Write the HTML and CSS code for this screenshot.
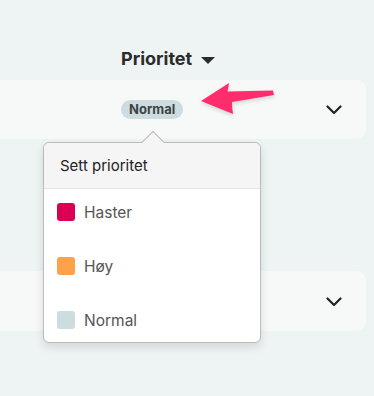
FILE: index.html
```html
<!DOCTYPE html>
<html lang="en">
<head>
    <meta charset="UTF-8">
    <title>Prioritet</title>
    <link rel="stylesheet" href="styles.css">
</head>
<body>

<div class="table">
    <div class="col-header">
        <span>Prioritet</span>
        <span class="caret"></span>
    </div>

    <div class="row">
        <span class="badge">Normal</span>
        <svg class="chevron" width="16" height="10" viewBox="0 0 16 10">
            <path d="M1.5 1.5 L8 8 L14.5 1.5" fill="none" stroke="#222" stroke-width="2.2" stroke-linecap="round" stroke-linejoin="round"/>
        </svg>
    </div>

    <div class="row row-second">
        <svg class="chevron" width="16" height="10" viewBox="0 0 16 10">
            <path d="M1.5 1.5 L8 8 L14.5 1.5" fill="none" stroke="#222" stroke-width="2.2" stroke-linecap="round" stroke-linejoin="round"/>
        </svg>
    </div>
</div>

<svg class="pointer-arrow" width="80" height="40" viewBox="196 80 80 40">
    <path d="M201 101 L229 83 Q228.5 87.5 227.5 91.5 Q250 91 273 90.5 L274 95 Q253 98.5 232 102 Q232 108 233 114 Z" fill="#ff2d6e"/>
</svg>

<div class="popover">
    <div class="popover-tip"></div>
    <div class="popover-title">Sett prioritet</div>
    <ul class="options">
        <li><span class="swatch haster"></span>Haster</li>
        <li><span class="swatch hoy"></span>Høy</li>
        <li><span class="swatch normal"></span>Normal</li>
    </ul>
</div>

</body>
</html>
```

FILE: styles.css
```css
body {
    margin: 0;
    background: #eef3f3;
    font-family: Inter, "Noto Sans", sans-serif;
    color: #222;
}
.table {
    padding-top: 45px;
}
.col-header {
    display: flex;
    align-items: center;
    height: 26px;
    padding-left: 121px;
    font-size: 18px;
    font-weight: 700;
    color: #2b2b2b;
}
.caret {
    width: 0;
    height: 0;
    margin-left: 9px;
    margin-top: 5px;
    border-left: 7px solid transparent;
    border-right: 7px solid transparent;
    border-top: 7px solid #2b2b2b;
}
.row {
    display: flex;
    align-items: center;
    width: 366px;
    height: 59px;
    margin-top: 9px;
    padding-left: 121px;
    padding-right: 24px;
    box-sizing: border-box;
    background: #f7f9f9;
    border-radius: 0 9px 9px 0;
}
.row-second {
    height: 60px;
    margin-top: 132px;
}
.badge {
    height: 19px;
    line-height: 19px;
    padding: 0 8px;
    border-radius: 10px;
    background: #cddcdf;
    color: #3d4446;
    font-size: 13px;
    font-weight: 700;
}
.chevron {
    margin-left: auto;
    margin-top: 1px;
}
.pointer-arrow {
    position: absolute;
    left: 196px;
    top: 80px;
    filter: drop-shadow(0 2px 2px rgba(0,0,0,0.15));
}
.popover {
    position: absolute;
    left: 43px;
    top: 142px;
    width: 218px;
    height: 201px;
    box-sizing: border-box;
    background: #fff;
    border: 1px solid #b9bcbc;
    border-radius: 6px;
    box-shadow: 0 4px 10px rgba(0,0,0,0.12);
}
.popover-tip {
    position: absolute;
    left: 101px;
    top: -9px;
    width: 15px;
    height: 15px;
    background: #f5f5f5;
    border-left: 1px solid #b9bcbc;
    border-top: 1px solid #b9bcbc;
    transform: rotate(45deg);
}
.popover-title {
    position: relative;
    height: 45px;
    line-height: 45px;
    padding-left: 16px;
    background: #f5f5f5;
    border-bottom: 1px solid #e4e4e4;
    border-radius: 6px 6px 0 0;
    font-size: 15px;
    color: #222;
}
.options {
    list-style: none;
    margin: 0;
    padding: 5px 0 4px 13px;
    display: flex;
    flex-direction: column;
    gap: 18px;
}
.options li {
    display: flex;
    align-items: center;
    height: 36px;
    gap: 9px;
    font-size: 15.5px;
    color: #555;
}
.swatch {
    width: 18px;
    height: 18px;
    border-radius: 3px;
}
.haster {
    background: #dc0055;
}
.hoy {
    background: #ffa04b;
}
.normal {
    background: #cddcdf;
}
```
